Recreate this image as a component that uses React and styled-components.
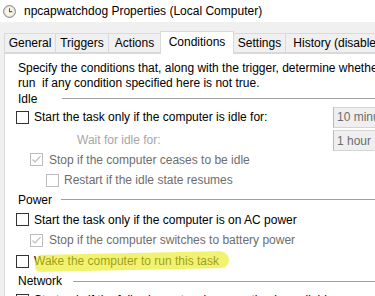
import React from 'react';
import styled, { createGlobalStyle } from 'styled-components';

const GlobalStyle = createGlobalStyle`
  html, body {
    margin: 0;
    padding: 0;
    background: #f0f0f0;
  }
`;

const Window = styled.div`
  width: 375px;
  height: 296px;
  overflow: hidden;
  background: #f0f0f0;
  font-family: 'Liberation Sans', Arial, sans-serif;
  font-size: 12px;
  color: #000;
  display: flex;
  flex-direction: column;
`;

const TitleBar = styled.div`
  height: 22px;
  flex: none;
  background: #fff;
  display: flex;
  align-items: center;
  gap: 8px;
  padding-left: 3px;
  white-space: nowrap;
`;

const TabStrip = styled.div`
  height: 31px;
  flex: none;
  box-sizing: border-box;
  display: flex;
  align-items: flex-end;
  padding-left: 4px;
  white-space: nowrap;
`;

const Tab = styled.div`
  width: ${(p) => p.$w}px;
  height: ${(p) => (p.$active ? 23 : 20)}px;
  margin-bottom: ${(p) => (p.$active ? -1 : 0)}px;
  margin-left: -1px;
  box-sizing: border-box;
  flex: none;
  border: 1px solid #d9d9d9;
  border-bottom: ${(p) => (p.$active ? 'none' : '1px solid #d9d9d9')};
  background: ${(p) => (p.$active ? '#fff' : '#f0f0f0')};
  display: flex;
  align-items: center;
  justify-content: center;
  padding-bottom: ${(p) => (p.$active ? 2 : 0)}px;
  position: relative;
  z-index: ${(p) => (p.$active ? 1 : 0)};
  &:first-child {
    margin-left: 0;
  }
`;

const Panel = styled.div`
  flex: 1;
  align-self: flex-start;
  width: 560px;
  margin-left: 4px;
  background: #fff;
  border-left: 1px solid #d9d9d9;
  border-top: 1px solid #d9d9d9;
  padding: 7px 0 0 11px;
  box-sizing: border-box;
`;

const Description = styled.div`
  padding-left: 2px;
  line-height: 15px;
  white-space: pre;
`;

const Header = styled.div`
  height: ${(p) => p.$h}px;
  display: flex;
  align-items: center;
  padding-left: 2px;
`;

const HeaderLabel = styled.span`
  width: ${(p) => p.$w}px;
  flex: none;
  white-space: nowrap;
`;

const Rule = styled.span`
  flex: 1;
  height: 1px;
  background: #a0a0a0;
`;

const Row = styled.div`
  height: ${(p) => p.$h}px;
  display: flex;
  align-items: center;
  padding-left: ${(p) => p.$indent || 0}px;
  white-space: nowrap;
  position: relative;
`;

const FieldRow = styled.div`
  height: ${(p) => p.$h}px;
  display: grid;
  grid-template-columns: 317px 100px;
  align-items: center;
  white-space: nowrap;
`;

const Box = styled.span`
  width: 13px;
  height: 13px;
  flex: none;
  box-sizing: border-box;
  border: 1px solid ${(p) => (p.$disabled ? '#bcbcbc' : '#333')};
  background: #fff;
  display: flex;
  align-items: center;
  justify-content: center;
`;

const Label = styled.span`
  margin-left: ${(p) => p.$gap ?? 5}px;
  color: ${(p) => p.$color || '#000'};
`;

const Combo = styled.div`
  height: 21px;
  box-sizing: border-box;
  border: 1px solid #d4d4d4;
  border-left-color: #b9b9b9;
  background: #efefef;
  color: #6d6d6d;
  display: flex;
  align-items: center;
  padding-left: 3px;
  margin-top: ${(p) => p.$offset || 0}px;
`;

const Highlight = styled.span`
  position: absolute;
  left: 19px;
  top: 3px;
  width: 194px;
  height: 17px;
  background: rgba(236, 236, 40, 0.66);
  border-radius: 7px 9px 8px 5px;
  transform: rotate(-1.2deg);
  filter: blur(0.5px);
  pointer-events: none;
`;

const ClockIcon = () => (
  <svg width="13" height="13" viewBox="0 0 13 13">
    <circle cx="6.5" cy="6.5" r="6" fill="#dcdcdc" stroke="#8c8c8c" strokeWidth="1" />
    <circle cx="6.5" cy="6.5" r="4.4" fill="#fbf6e4" />
    <path d="M6.5 3.2 V6.6 H9.2" fill="none" stroke="#6a5d3a" strokeWidth="1.1" />
  </svg>
);

const Check = ({ checked, disabled }) => (
  <Box $disabled={disabled}>
    {checked && (
      <svg width="11" height="11" viewBox="0 0 11 11">
        <path d="M1.5 5.5 L4 8 L9.5 2.2" fill="none" stroke={disabled ? '#bcbcbc' : '#333'} strokeWidth="1.2" />
      </svg>
    )}
  </Box>
);

const tabs = [
  { name: 'General', w: 52 },
  { name: 'Triggers', w: 54 },
  { name: 'Actions', w: 53 },
  { name: 'Conditions', w: 74, active: true },
  { name: 'Settings', w: 53 },
  { name: 'History (disabled)', w: 110 },
];

export default function App() {
  return (
    <>
      <GlobalStyle />
      <Window>
        <TitleBar>
          <ClockIcon />
          <span>npcapwatchdog Properties (Local Computer)</span>
        </TitleBar>
        <TabStrip>
          {tabs.map((t) => (
            <Tab key={t.name} $w={t.w} $active={t.active}>
              {t.name}
            </Tab>
          ))}
        </TabStrip>
        <Panel>
          <Description>
            {'Specify the conditions that, along with the trigger, determine whether the task should run.  The task will not\nrun  if any condition specified here is not true.'}
          </Description>

          <Header $h={15}>
            <HeaderLabel $w={44}>Idle</HeaderLabel>
            <Rule />
          </Header>
          <FieldRow $h={22}>
            <Row $h={22}>
              <Check />
              <Label>Start the task only if the computer is idle for:</Label>
            </Row>
            <Combo>10 minutes</Combo>
          </FieldRow>
          <FieldRow $h={21}>
            <Row $h={21} $indent={61}>
              <Label $gap={0} $color="#a6a6a6">Wait for idle for:</Label>
            </Row>
            <Combo $offset={2}>1 hour</Combo>
          </FieldRow>
          <Row $h={21} $indent={14}>
            <Check checked disabled />
            <Label $gap={6} $color="#6d6d6d">Stop if the computer ceases to be idle</Label>
          </Row>
          <Row $h={20} $indent={30}>
            <Check disabled />
            <Label $color="#6d6d6d">Restart if the idle state resumes</Label>
          </Row>

          <Header $h={19}>
            <HeaderLabel $w={43}>Power</HeaderLabel>
            <Rule />
          </Header>
          <Row $h={21}>
            <Check />
            <Label>Start the task only if the computer is on AC power</Label>
          </Row>
          <Row $h={20} $indent={14}>
            <Check checked disabled />
            <Label $gap={6} $color="#6d6d6d">Stop if the computer switches to battery power</Label>
          </Row>
          <Row $h={22}>
            <Check />
            <Label>Wake the computer to run this task</Label>
            <Highlight />
          </Row>

          <Header $h={18}>
            <HeaderLabel $w={55}>Network</HeaderLabel>
            <Rule />
          </Header>
          <Row $h={20}>
            <Check />
            <Label>Start only if the following network connection is available:</Label>
          </Row>
        </Panel>
      </Window>
    </>
  );
}
